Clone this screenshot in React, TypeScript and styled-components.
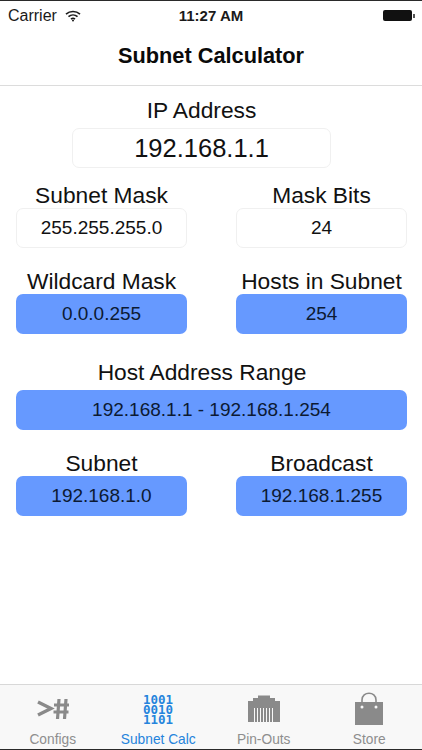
import React, { FC } from "react";
import styled, { createGlobalStyle } from "styled-components";

const GlobalStyle = createGlobalStyle`
  html, body {
    margin: 0;
    padding: 0;
    background: #fff;
  }
  body {
    font-family: "Liberation Sans", Arial, sans-serif;
    color: #0c0c0c;
  }
`;

const Screen = styled.div`
  width: 422px;
  height: 750px;
  display: flex;
  flex-direction: column;
  box-sizing: border-box;
  overflow: hidden;
  background: #fff;
  border-top: 1px solid #2a2a2a;
  border-bottom: 1px solid #2a2a2a;
`;

const StatusBar = styled.div`
  height: 29px;
  flex: none;
  display: grid;
  grid-template-columns: 1fr auto 1fr;
  align-items: center;
  padding: 0 8px;
  font-size: 16px;
  color: #1a1a1a;
`;

const Carrier = styled.div`
  display: flex;
  align-items: center;
  gap: 8px;
`;

const Time = styled.div`
  font-weight: 700;
  font-size: 15px;
`;

const Battery = styled.div`
  justify-self: end;
  margin-right: 2px;
  width: 29px;
  height: 11px;
  border-radius: 2px;
  background: #111;
  position: relative;
  &::after {
    content: "";
    position: absolute;
    right: -3px;
    top: 4px;
    width: 2px;
    height: 4px;
    background: #555;
  }
`;

const NavBar = styled.div`
  height: 56px;
  flex: none;
  box-sizing: border-box;
  display: flex;
  align-items: center;
  justify-content: center;
  padding-bottom: 3px;
  border-bottom: 1px solid #dcdcdc;
  font-size: 21.75px;
  font-weight: 700;
  color: #0a0a0a;
`;

const Content = styled.div`
  flex: 1;
  display: flex;
  flex-direction: column;
  padding: 11px 15px 0 16px;
`;

const Row = styled.div<{ $mt: number }>`
  display: grid;
  grid-template-columns: 171px 171px;
  justify-content: space-between;
  margin-top: ${(p) => p.$mt}px;
`;

const Field = styled.div<{ $mt?: number }>`
  display: flex;
  flex-direction: column;
  align-items: center;
  margin-top: ${(p) => p.$mt ?? 0}px;
`;

const AddressField = styled(Field)`
  width: 259px;
  margin-left: 56px;
`;

const Label = styled.div<{ $shift?: number }>`
  font-size: 22.75px;
  line-height: 26px;
  height: 26px;
  white-space: nowrap;
  color: #111;
  margin-left: ${(p) => p.$shift ?? 0}px;
`;

const Box = styled.div<{ $gap?: number }>`
  width: 100%;
  height: 40px;
  margin-top: ${(p) => p.$gap ?? 0}px;
  box-sizing: border-box;
  display: flex;
  align-items: center;
  justify-content: center;
  border-radius: 7px;
  white-space: nowrap;
`;

const InputBox = styled(Box)<{ $big?: boolean }>`
  border: 1px solid #f0f0f0;
  background: #fff;
  font-size: ${(p) => (p.$big ? 25.5 : 19)}px;
  color: #111;
`;

const ResultBox = styled(Box)`
  background: #6699ff;
  font-size: 19px;
  color: #0c1a33;
`;

const TabBar = styled.div`
  height: 65px;
  flex: none;
  box-sizing: border-box;
  display: grid;
  grid-template-columns: repeat(4, 1fr);
  background: #f8f8f8;
  border-top: 1px solid #d8d8d8;
`;

const Tab = styled.div<{ $active?: boolean }>`
  display: flex;
  flex-direction: column;
  align-items: center;
  color: ${(p) => (p.$active ? "#2584dc" : "#8e8e8e")};
`;

const TabIcon = styled.div`
  height: 47px;
  display: flex;
  align-items: center;
  justify-content: center;
`;

const TabLabel = styled.div`
  font-size: 13.75px;
  line-height: 16px;
  white-space: nowrap;
`;

const WifiIcon: FC = () => (
  <svg width="16" height="12" viewBox="0 0 16 12" fill="none" stroke="#1a1a1a" strokeWidth="1.6">
    <path d="M1 4.2C5 .6 11 .6 15 4.2" />
    <path d="M3.5 6.7c2.6-2.3 6.4-2.3 9 0" />
    <path d="M6 9.1c1.2-1 2.8-1 4 0" />
    <circle cx="8" cy="10.6" r="1" fill="#1a1a1a" stroke="none" />
  </svg>
);

const PromptIcon: FC = () => (
  <svg width="32" height="21" viewBox="0 0 32 21" fill="none" stroke="#8a8a8a">
    <path strokeWidth="3.4" d="M1 4l13 6.5L1 17" />
    <path strokeWidth="3.2" d="M22 1l-1.5 20M29 1l-1.5 20M17 7h15M16.5 14h15" />
  </svg>
);

const BinaryIcon: FC = () => (
  <svg
    width="32"
    height="40"
    viewBox="0 0 32 40"
    fill="#2584dc"
    fontFamily="'DejaVu Sans Mono', monospace"
    fontWeight="700"
    fontSize="12.5"
    textAnchor="middle"
  >
    <text x="16" y="15">1001</text>
    <text x="16" y="25">0010</text>
    <text x="16" y="35">1101</text>
  </svg>
);

const JackIcon: FC = () => (
  <svg width="32" height="27" viewBox="0 0 32 27">
    <path fill="#8a8a8a" d="M0 6h5V3h5V.5h12V3h5v3h5v21H0z" />
    <path
      stroke="#f8f8f8"
      strokeWidth="1"
      d="M6.5 13v14M9.5 13v14M12.5 13v14M15.5 13v14M18.5 13v14M21.5 13v14M24.5 13v14"
    />
  </svg>
);

const BagIcon: FC = () => (
  <svg width="30" height="33" viewBox="0 0 30 33">
    <path fill="#8a8a8a" d="M1 10h28v23H1z" />
    <path fill="none" stroke="#8a8a8a" strokeWidth="1.6" d="M8 15V8c0-9 14-9 14 0v7" />
    <circle cx="8" cy="15" r="1.5" fill="#f8f8f8" />
    <circle cx="22" cy="15" r="1.5" fill="#f8f8f8" />
  </svg>
);

const App: FC = () => (
  <Screen>
    <GlobalStyle />
    <StatusBar>
      <Carrier>
        Carrier
        <WifiIcon />
      </Carrier>
      <Time>11:27 AM</Time>
      <Battery />
    </StatusBar>

    <NavBar>Subnet Calculator</NavBar>

    <Content>
      <AddressField>
        <Label>IP Address</Label>
        <InputBox $big $gap={5}>192.168.1.1</InputBox>
      </AddressField>

      <Row $mt={14}>
        <Field>
          <Label>Subnet Mask</Label>
          <InputBox>255.255.255.0</InputBox>
        </Field>
        <Field>
          <Label>Mask Bits</Label>
          <InputBox>24</InputBox>
        </Field>
      </Row>

      <Row $mt={20}>
        <Field>
          <Label>Wildcard Mask</Label>
          <ResultBox>0.0.0.255</ResultBox>
        </Field>
        <Field>
          <Label>Hosts in Subnet</Label>
          <ResultBox>254</ResultBox>
        </Field>
      </Row>

      <Field $mt={25}>
        <Label $shift={-19}>Host Address Range</Label>
        <ResultBox $gap={5}>192.168.1.1 - 192.168.1.254</ResultBox>
      </Field>

      <Row $mt={20}>
        <Field>
          <Label>Subnet</Label>
          <ResultBox>192.168.1.0</ResultBox>
        </Field>
        <Field>
          <Label>Broadcast</Label>
          <ResultBox>192.168.1.255</ResultBox>
        </Field>
      </Row>
    </Content>

    <TabBar>
      <Tab>
        <TabIcon>
          <PromptIcon />
        </TabIcon>
        <TabLabel>Configs</TabLabel>
      </Tab>
      <Tab $active>
        <TabIcon>
          <BinaryIcon />
        </TabIcon>
        <TabLabel>Subnet Calc</TabLabel>
      </Tab>
      <Tab>
        <TabIcon>
          <JackIcon />
        </TabIcon>
        <TabLabel>Pin-Outs</TabLabel>
      </Tab>
      <Tab>
        <TabIcon>
          <BagIcon />
        </TabIcon>
        <TabLabel>Store</TabLabel>
      </Tab>
    </TabBar>
  </Screen>
);

export default App;
